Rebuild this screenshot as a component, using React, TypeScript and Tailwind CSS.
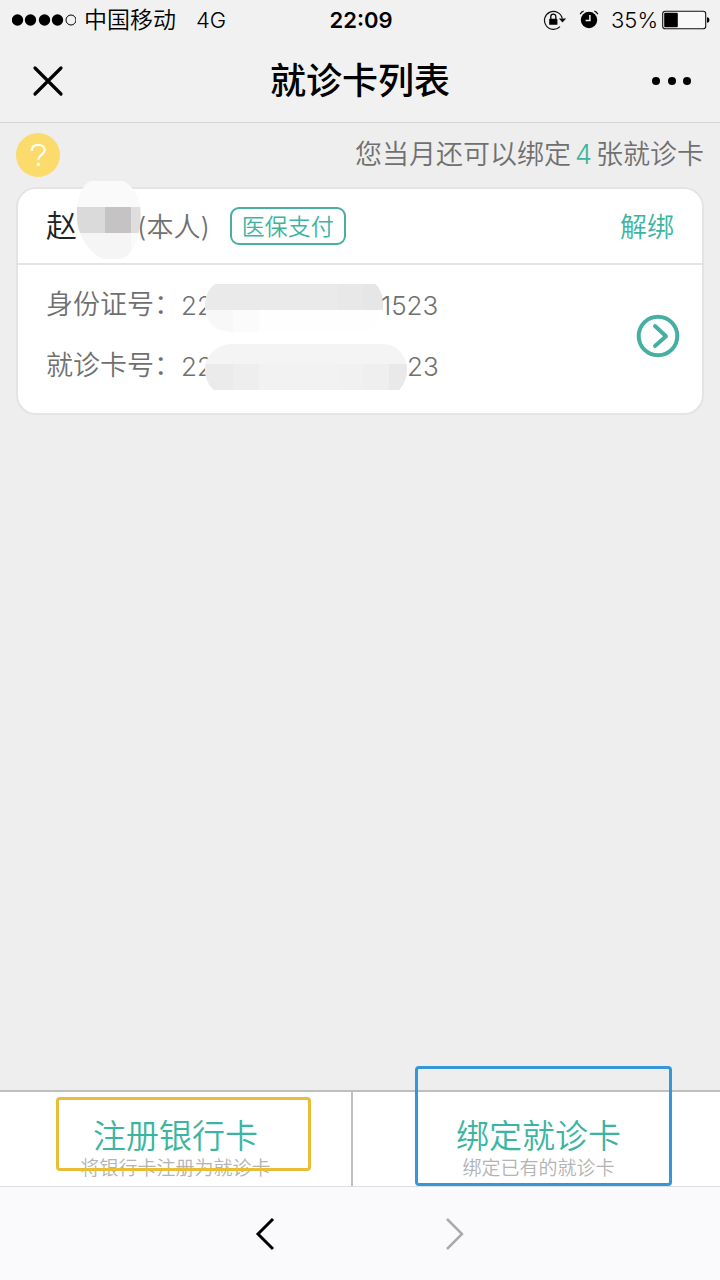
const cards = [
  {
    surname: "赵",
    relation: "(本人)",
    tag: "医保支付",
  },
];

function SignalDots() {
  return (
    <svg className="w-16 h-3" viewBox="0 0 64 12" aria-hidden="true">
      {[6, 19, 33, 46].map((cx) => (
        <circle key={cx} cx={cx - 0.5} cy="6" r="5.7" fill="#000" />
      ))}
      <circle cx="59" cy="6" r="5" fill="none" stroke="#000" strokeWidth="1" />
    </svg>
  );
}

function RotationLock() {
  return (
    <svg className="w-6 h-5" viewBox="0 0 24 20" aria-hidden="true">
      <path d="M17 16.6A9 9 0 1 1 19.3 8.6" fill="none" stroke="#111" strokeWidth="1.2" />
      <path d="M15.8 8.6h7.4l-3.7 4z" fill="#111" />
      <rect x="6.2" y="8.8" width="8.2" height="6" rx="0.6" fill="#000" />
      <path d="M7.8 9V6.6a2.5 2.5 0 0 1 5 0V9" fill="none" stroke="#000" strokeWidth="1.3" />
    </svg>
  );
}

function AlarmIcon() {
  return (
    <svg className="w-5 h-5" viewBox="0 0 20 20" aria-hidden="true">
      <circle cx="10" cy="10" r="8.2" fill="#000" />
      <path d="M10.9 5v5.6H6.6" fill="none" stroke="#f1f1f1" strokeWidth="1.5" />
      <path d="M1.2 4.2A5 5 0 0 1 4.6 1.2M18.8 4.2a5 5 0 0 0-3.400-3" fill="none" stroke="#000" strokeWidth="1.2" />
    </svg>
  );
}

function Battery() {
  return (
    <svg className="w-12 h-5" viewBox="0 0 48 20" aria-hidden="true">
      <rect x="0.7" y="1.2" width="43" height="17.6" rx="2.6" fill="#fff" fillOpacity="0.5" stroke="#111" strokeWidth="1.1" />
      <rect x="2.2" y="2.8" width="13.6" height="14.4" rx="1" fill="#000" />
      <path d="M45 7.2c3.2 0 3.2 5.6 0 5.6z" fill="#000" />
    </svg>
  );
}

function NameMask() {
  return (
    <svg className="w-16 h-20" viewBox="0 0 64 80" aria-hidden="true">
      <clipPath id="name-mask">
        <path d="M13 1h33c8 4 15 12 17 24 2 16-1 36-10 48-4 4-7 6-12 6H27c-6-2-10-5-13-9C5 61-2 47 0 27 2 14 6 5 13 1z" />
      </clipPath>
      <g clipPath="url(#name-mask)">
        <rect width="64" height="80" fill="#fafafa" />
        <rect y="27" width="28" height="26" fill="#dadada" />
        <rect x="28" y="27" width="26" height="26" fill="#c6c3c5" />
        <rect x="54" y="27" width="10" height="26" fill="#dedede" />
        <rect y="53" width="54" height="27" fill="#f5f5f5" />
      </g>
    </svg>
  );
}

function IdMask() {
  return (
    <svg className="w-[178px] h-12" viewBox="0 0 178 48" aria-hidden="true">
      <clipPath id="id-mask">
        <path d="M10 0h160c5 4 8 12 8 22 0 14-10 26-26 26H28C12 48 0 40 0 22 0 12 4 4 10 0z" />
      </clipPath>
      <g clipPath="url(#id-mask)">
        <rect width="178" height="48" fill="#fefefe" />
        <rect width="178" height="26" fill="#eaeaea" />
        <rect x="133" width="45" height="26" fill="#e8e8e8" />
        <rect x="158" width="20" height="26" fill="#e6e6e6" />
        <rect y="26" width="28" height="22" fill="#f8f8f8" />
        <rect x="28" y="26" width="26" height="22" fill="#fbfbfb" />
      </g>
    </svg>
  );
}

function CardMask() {
  return (
    <svg className="w-[202px] h-[46px]" viewBox="0 0 202 46" aria-hidden="true">
      <clipPath id="card-mask">
        <path d="M26 0h152c14 0 24 12 24 25 0 9-4 17-8 21H9C4 42 0 34 0 25 0 12 12 0 26 0z" />
      </clipPath>
      <g clipPath="url(#card-mask)">
        <rect width="202" height="46" fill="#f4f4f4" />
        <rect y="20" width="28" height="26" fill="#ebebeb" />
        <rect x="28" y="20" width="26" height="26" fill="#eeeeee" />
        <rect x="54" y="20" width="79" height="26" fill="#f2f2f2" />
        <rect x="133" y="20" width="25" height="26" fill="#f1f1f1" />
        <rect x="158" y="20" width="26" height="26" fill="#efefef" />
        <rect x="184" y="20" width="18" height="26" fill="#e9e9e9" />
      </g>
    </svg>
  );
}

export default function App() {
  return (
    <div className="flex min-h-screen flex-col bg-[#eeeeee] font-['Inter','Noto_Sans_CJK_SC',sans-serif] font-[350] text-[#707070]">
      <header className="border-b border-[#d4d4d4] bg-[#f1f1f1] text-black">
        <div className="grid h-10 grid-cols-[1fr_auto_1fr] items-center pr-[10px] pl-3 text-[22px]">
          <div className="flex items-center gap-2">
            <SignalDots />
            <span className="text-[23px]">中国移动</span>
            <span className="ml-3">4G</span>
          </div>
          <span className="font-semibold">22:09</span>
          <div className="flex items-center justify-end">
            <RotationLock />
            <span className="ml-3">
              <AlarmIcon />
            </span>
            <span className="mr-1 ml-3">35%</span>
            <Battery />
          </div>
        </div>
        <div className="grid h-[82px] grid-cols-[1fr_auto_1fr] items-center px-7">
          <button type="button" aria-label="关闭" className="w-10">
            <svg className="size-10" viewBox="0 0 40 40">
              <path d="M7 7l26 26M33 7L7 33" stroke="#000" strokeWidth="3.2" strokeLinecap="round" />
            </svg>
          </button>
          <h1 className="text-[36px] font-medium">就诊卡列表</h1>
          <button type="button" aria-label="更多" className="justify-self-end">
            <svg className="h-10 w-10" viewBox="0 0 40 40">
              <circle cx="4" cy="20" r="4" />
              <circle cx="20" cy="20" r="4" />
              <circle cx="35" cy="20" r="4" />
            </svg>
          </button>
        </div>
      </header>

      <main className="flex-1 px-4">
        <div className="flex h-16 items-center justify-between">
          <button
            type="button"
            aria-label="帮助"
            className="flex size-11 items-center justify-center rounded-full bg-[#fadb6b]"
          >
            <svg className="size-6" viewBox="0 0 24 24" fill="none" stroke="#fffdf2" strokeWidth="2.2">
              <path d="M5.5 7.8C5.8 4 8.5 1.8 12.2 1.8c3.8 0 6.5 2.2 6.5 5.5 0 4.2-6.2 4.6-6.2 9.4" />
              <circle cx="12.4" cy="21.3" r="1.7" fill="#fffdf2" stroke="none" />
            </svg>
          </button>
          <p className="text-[27px]">
            您当月还可以绑定<span className="mx-1 text-[#3cb5a0]">4</span>张就诊卡
          </p>
        </div>

        {cards.map((card) => (
          <section key={card.surname} className="rounded-[20px] border-2 border-[#e4e4e4] bg-white text-[27px]">
            <div className="flex h-[76px] items-center border-b-2 border-[#e4e4e4] px-7">
              <span className="text-[31px] text-[#222222]">{card.surname}</span>
              <span className="-mt-3 -mr-1">
                <NameMask />
              </span>
              <span className="pt-1">{card.relation}</span>
              <span className="ml-5 flex h-[38px] items-center rounded-[9px] border-2 border-[#4aada0] px-[10px] pt-0.5 text-[23px] text-[#3cb5a0]">
                {card.tag}
              </span>
              <button type="button" className="ml-auto pt-1 text-[#3cb5a0]">
                解绑
              </button>
            </div>
            <div className="flex items-center justify-between pt-[10px] pr-[22px] pb-4 pl-7">
              <dl>
                <div className="flex h-[61px] items-center">
                  <dt>身份证号：</dt>
                  <dd className="flex items-center text-[26px]">
                    <span>22</span>
                    <span className="mt-1 -ml-2">
                      <IdMask />
                    </span>
                    <span className="-ml-0.5">1523</span>
                  </dd>
                </div>
                <div className="flex h-[61px] items-center">
                  <dt>就诊卡号：</dt>
                  <dd className="flex items-center text-[26px]">
                    <span>22</span>
                    <span className="-ml-2">
                      <CardMask />
                    </span>
                    <span>23</span>
                  </dd>
                </div>
              </dl>
              <button type="button" aria-label="查看详情">
                <svg className="size-11" viewBox="0 0 44 44" fill="none" stroke="#45afa1" strokeWidth="4">
                  <circle cx="22" cy="22" r="19.3" />
                  <path d="M19 12l11 10.2L19 32" strokeLinecap="round" strokeLinejoin="round" />
                </svg>
              </button>
            </div>
          </section>
        ))}
      </main>

      <div className="flex h-24 border-t-2 border-[#bfbfbf] bg-white">
        <button
          type="button"
          className="relative flex w-[49%] flex-col items-center justify-end border-r-2 border-[#bfbfbf] pb-1"
        >
          <span className="text-[33px] leading-[40px] text-[#3cb5a0]">注册银行卡</span>
          <span className="text-[19px] leading-[26px] text-[#b3b3b3]">将银行卡注册为就诊卡</span>
          <span className="absolute top-[5px] right-10 left-14 h-[74px] rounded-sm border-3 border-[#e9bd35]" />
        </button>
        <button type="button" className="relative flex flex-1 flex-col items-center justify-end pb-1 pl-1">
          <span className="text-[33px] leading-[40px] text-[#3cb5a0]">绑定就诊卡</span>
          <span className="text-[19px] leading-[26px] text-[#b3b3b3]">绑定已有的就诊卡</span>
          <span className="absolute -top-[26px] right-12 bottom-0 left-[62px] rounded-sm border-3 border-[#3597d8]" />
        </button>
      </div>

      <nav className="flex h-[94px] items-center justify-center gap-[150px] border-t border-[#dddddd] bg-[#fafafc]">
        <button type="button" aria-label="后退">
          <svg className="size-10" viewBox="0 0 40 40" fill="none" stroke="#000" strokeWidth="3">
            <path d="M28 5L13 20l15 15" />
          </svg>
        </button>
        <button type="button" aria-label="前进">
          <svg className="size-10" viewBox="0 0 40 40" fill="none" stroke="#aaaaaa" strokeWidth="2.5">
            <path d="M12 5l15 15-15 15" />
          </svg>
        </button>
      </nav>
    </div>
  );
}
